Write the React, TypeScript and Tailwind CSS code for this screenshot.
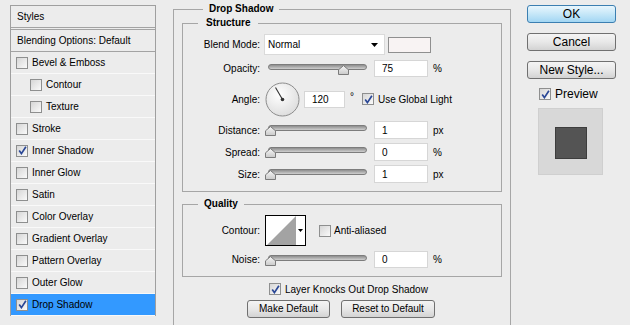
import React from 'react'

const layers = [
  { name: 'Bevel & Emboss' },
  { name: 'Contour', sub: true },
  { name: 'Texture', sub: true },
  { name: 'Stroke' },
  { name: 'Inner Shadow', checked: true },
  { name: 'Inner Glow' },
  { name: 'Satin' },
  { name: 'Color Overlay' },
  { name: 'Gradient Overlay' },
  { name: 'Pattern Overlay' },
  { name: 'Outer Glow' },
  { name: 'Drop Shadow', checked: true, active: true },
]

function Check({ checked = false }: { checked?: boolean }) {
  return (
    <span className="flex h-[12px] w-[12px] shrink-0 items-center justify-center border border-[#8e8f8f] bg-linear-to-br from-[#d6d6d6] to-[#fafafa]">
      {checked && (
        <svg width="9" height="9" viewBox="0 0 9 9">
          <path d="M1.2 4.6 L3.4 7.6 L7.9 0.8" fill="none" stroke="#2a4796" strokeWidth="1.7" />
        </svg>
      )}
    </span>
  )
}

function Slider({ thumb }: { thumb: string }) {
  return (
    <div className="relative ml-[4px] h-full w-[106px]">
      <div className="ml-[4px] mt-[4px] h-[6px] w-[99px] rounded-full border border-[#7c7c7c] bg-linear-to-b from-[#8e8e8e] to-[#cfcfcf]" />
      <svg className={`absolute top-[5px] ${thumb}`} width="11" height="10" viewBox="0 0 11 10">
        <defs>
          <linearGradient id="tg" x1="0" y1="0" x2="0" y2="1">
            <stop offset="0" stopColor="#f7f7f7" />
            <stop offset="1" stopColor="#c9c9c9" />
          </linearGradient>
        </defs>
        <path d="M0.5 9.5 V4.8 L5.5 0.6 L10.5 4.8 V9.5 Z" fill="url(#tg)" stroke="#7b7b7b" />
      </svg>
    </div>
  )
}

function Field({ value, w = 'w-[54px]', h = 'h-[18px]' }: { value: string; w?: string; h?: string }) {
  return (
    <div className={`ml-[4px] flex ${w} ${h} items-center border border-[#d6d6d6] bg-white pl-[7px]`}>
      {value}
    </div>
  )
}

function Label({ children }: { children: React.ReactNode }) {
  return <span className="w-[77px] shrink-0 text-right">{children}</span>
}

function Button({ children, primary = false, className = '' }: { children: React.ReactNode; primary?: boolean; className?: string }) {
  return (
    <button
      className={`flex h-[18px] items-center justify-center rounded-[3px] border leading-none ${
        primary
          ? 'border-[#3c7fb1] bg-linear-to-b from-[#e8f6fd] via-[#c6e7f8] to-[#a2d6f3]'
          : 'border-[#707070] bg-linear-to-b from-[#f4f4f4] via-[#e8e8e8] to-[#d3d3d3]'
      } ${className}`}
    >
      {children}
    </button>
  )
}

export default function App() {
  return (
    <div className="flex h-[325px] w-[630px] overflow-hidden bg-[#ececec] font-['Liberation_Sans',Arial,sans-serif] text-[10px] text-black">
      {/* styles list */}
      <div className="ml-[10px] mt-[5px] w-[146px] shrink-0 self-start border-x border-t border-[#9f9f9f]">
        <div className="flex h-[22px] items-center border-b border-[#a3a3a3] pl-[6px]">Styles</div>
        <div className="mt-[1px] flex h-[23px] items-center border-y border-[#a3a3a3] pl-[6px]">
          Blending Options: Default
        </div>
        {layers.map((l) => (
          <div
            key={l.name}
            className={`flex h-[22px] items-center gap-[4px] border-b border-[#f9f9f9] ${
              l.sub ? 'pl-[19px]' : 'pl-[5px]'
            } ${l.active ? 'bg-[#3399ff]' : ''}`}
          >
            <Check checked={l.checked} />
            <span>{l.name}</span>
          </div>
        ))}
      </div>

      {/* settings */}
      <div className="ml-[17px] w-[338px] shrink-0">
        <fieldset className="mt-[2px] h-[340px] border border-[#a6a6a6] px-[8px]">
          <legend className="ml-[21px] px-[6px] font-bold leading-[14px]">Drop Shadow</legend>

          <fieldset className="border border-[#a6a6a6] pb-[8px]">
            <legend className="ml-[15px] px-[8px] font-bold leading-[14px]">Structure</legend>

            <div className="mt-[4px] flex h-[21px] items-center">
              <Label>Blend Mode:</Label>
              <div className="ml-[4px] flex h-[21px] w-[121px] items-center justify-between border border-[#dadada] bg-white pl-[3px] pr-[6px]">
                <span>Normal</span>
                <svg width="7" height="4" viewBox="0 0 7 4">
                  <path d="M0 0 H7 L3.5 4 Z" fill="#000" />
                </svg>
              </div>
              <div className="ml-[3px] h-[16px] w-[43px] border border-[#8f8f8f] bg-[#f8f3f3]" />
            </div>

            <div className="mt-[5px] flex h-[17px] items-center">
              <Label>Opacity:</Label>
              <Slider thumb="left-[74px]" />
              <Field value="75" h="h-[17px]" />
              <span className="ml-[5px]">%</span>
            </div>

            <div className="mt-[4px] flex h-[36px] items-center">
              <Label>Angle:</Label>
              <svg className="ml-[5px]" width="35" height="35" viewBox="0 0 35 35">
                <defs>
                  <radialGradient id="dial" cx="0.4" cy="0.35" r="0.7">
                    <stop offset="0" stopColor="#ffffff" />
                    <stop offset="1" stopColor="#dcdcdc" />
                  </radialGradient>
                </defs>
                <circle cx="17.5" cy="17.5" r="16.5" fill="url(#dial)" stroke="#8c8c8c" />
                <line x1="17.5" y1="17.5" x2="10.5" y2="5.5" stroke="#333" strokeWidth="1.1" />
                <circle cx="17.5" cy="17.5" r="1.8" fill="#333" />
              </svg>
              <Field value="120" w="w-[41px]" h="h-[17px]" />
              <span className="ml-[5px] -mt-[5px]">°</span>
              <span className="ml-[8px]">
                <Check checked />
              </span>
              <span className="ml-[4px]">Use Global Light</span>
            </div>

            <div className="mt-[4px] flex h-[18px] items-center">
              <Label>Distance:</Label>
              <Slider thumb="left-[1px]" />
              <Field value="1" />
              <span className="ml-[5px]">px</span>
            </div>
            <div className="mt-[4px] flex h-[18px] items-center">
              <Label>Spread:</Label>
              <Slider thumb="left-[1px]" />
              <Field value="0" />
              <span className="ml-[5px]">%</span>
            </div>
            <div className="mt-[4px] flex h-[18px] items-center">
              <Label>Size:</Label>
              <Slider thumb="left-[1px]" />
              <Field value="1" />
              <span className="ml-[5px]">px</span>
            </div>
          </fieldset>

          <fieldset className="mt-[5px] border border-[#a6a6a6] pb-[8px]">
            <legend className="ml-[15px] px-[6px] font-bold leading-[14px]">Quality</legend>

            <div className="mt-[4px] flex h-[31px] items-center">
              <Label>Contour:</Label>
              <div className="ml-[5px] flex h-[31px] w-[41px] border border-black bg-white">
                <svg width="30" height="29" viewBox="0 0 30 29">
                  <path d="M1 29 L30 0 V29 Z" fill="#a3a3a3" />
                </svg>
                <div className="flex flex-1 items-center justify-center">
                  <svg width="5" height="3" viewBox="0 0 5 3">
                    <path d="M0 0 H5 L2.5 3 Z" fill="#000" />
                  </svg>
                </div>
              </div>
              <span className="ml-[13px]">
                <Check />
              </span>
              <span className="ml-[3px]">Anti-aliased</span>
            </div>

            <div className="mt-[5px] flex h-[17px] items-center">
              <Label>Noise:</Label>
              <Slider thumb="left-[1px]" />
              <Field value="0" h="h-[17px]" />
              <span className="ml-[5px]">%</span>
            </div>
          </fieldset>

          <div className="ml-[87px] mt-[6px] flex h-[12px] items-center gap-[4px]">
            <Check checked />
            <span>Layer Knocks Out Drop Shadow</span>
          </div>

          <div className="ml-[65px] mt-[5px] flex gap-[11px]">
            <Button className="w-[83px]">Make Default</Button>
            <Button className="w-[94px]">Reset to Default</Button>
          </div>
        </fieldset>
      </div>

      {/* buttons */}
      <div className="ml-[16px] flex w-[89px] shrink-0 flex-col text-[12px]">
        <Button primary className="mt-[5px] w-full">OK</Button>
        <Button className="mt-[10px] w-full">Cancel</Button>
        <Button className="mt-[10px] w-full">New Style...</Button>
        <div className="ml-[12px] mt-[9px] flex h-[12px] items-center gap-[4px]">
          <Check checked />
          <span>Preview</span>
        </div>
        <div className="ml-[11px] mt-[8px] h-[67px] w-[65px] border border-[#cfcfcf] bg-[#d8d8d8] pl-[16px] pt-[18px]">
          <div className="h-[32px] w-[32px] border border-[#3d3d3d] bg-[#545454]" />
        </div>
      </div>
    </div>
  )
}
